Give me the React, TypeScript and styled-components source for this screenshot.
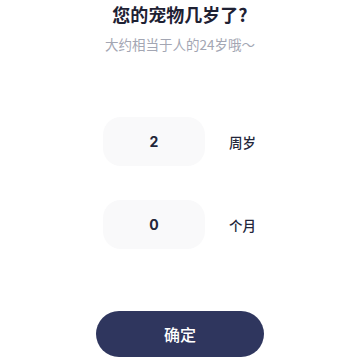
import React, { useState } from "react";
import styled, { createGlobalStyle } from "styled-components";

const Global = createGlobalStyle`
  html, body { margin: 0; padding: 0; background: #ffffff; }
  body { font-family: "Noto Sans CJK SC", "Noto Sans", sans-serif; }
  * { box-sizing: border-box; }
`;

const Page = styled.div`
  width: 360px;
  height: 360px;
  display: flex;
  flex-direction: column;
  align-items: center;
  overflow: hidden;
`;

const Title = styled.h1`
  margin: 0;
  margin-top: 1px;
  font-size: 18px;
  line-height: 26px;
  font-weight: 700;
  color: #1e2133;
`;

const Subtitle = styled.p`
  margin: 0;
  margin-top: 7px;
  font-size: 13.5px;
  line-height: 20px;
  color: #a3a6b3;
`;

const Fields = styled.div`
  margin-top: 63px;
  display: flex;
  flex-direction: column;
  gap: 34px;
`;

const Row = styled.div`
  display: flex;
  align-items: center;
  gap: 24px;
`;

const Box = styled.div`
  width: 102px;
  height: 49px;
  border-radius: 18px;
  background: #f9f9fa;
  display: flex;
  align-items: center;
  justify-content: center;
  font-family: "Inter", "Noto Sans", sans-serif;
  font-size: 14px;
  font-weight: 700;
  color: #23263a;
`;

const Unit = styled.span`
  width: 28px;
  font-size: 13.5px;
  font-weight: 500;
  color: #23263a;
`;

const Confirm = styled.button`
  margin-top: 62px;
  width: 168px;
  height: 46px;
  border: none;
  border-radius: 23px;
  background: #2f365e;
  color: #ffffff;
  font-family: "Noto Sans CJK SC", "Noto Sans", sans-serif;
  font-size: 16px;
  font-weight: 500;
  cursor: pointer;
`;

export default function App() {
  const [years] = useState(2);
  const [months] = useState(0);
  return (
    <>
      <Global />
      <Page>
        <Title>您的宠物几岁了?</Title>
        <Subtitle>大约相当于人的24岁哦～</Subtitle>
        <Fields>
          <Row>
            <Box>{years}</Box>
            <Unit>周岁</Unit>
          </Row>
          <Row>
            <Box>{months}</Box>
            <Unit>个月</Unit>
          </Row>
        </Fields>
        <Confirm>确定</Confirm>
      </Page>
    </>
  );
}
